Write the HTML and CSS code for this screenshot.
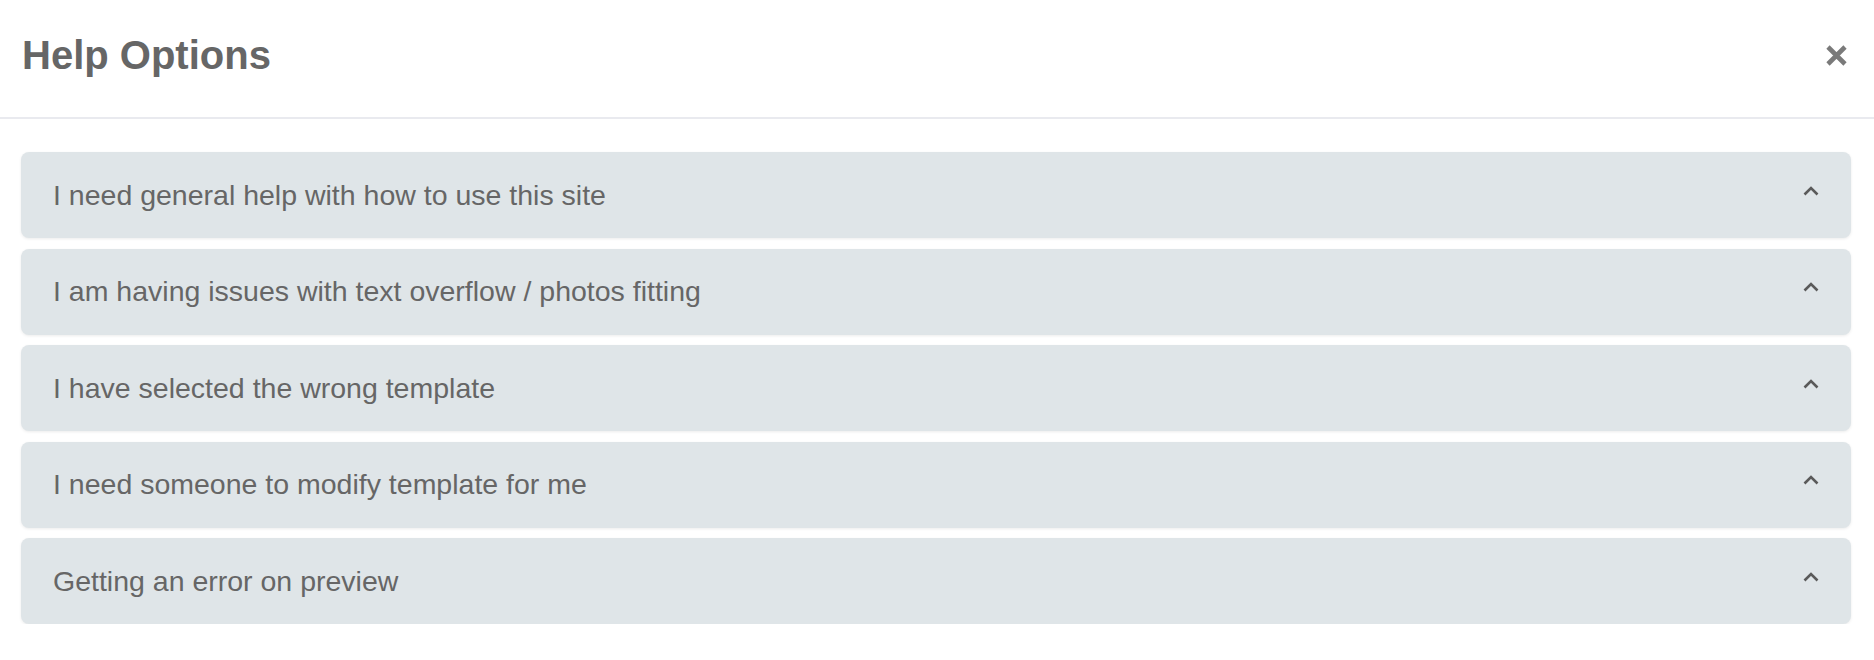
FILE: index.html
```html
<!DOCTYPE html>
<html lang="en">
<head>
  <meta charset="UTF-8" />
  <meta name="viewport" content="width=device-width, initial-scale=1.0"/>
  <title>Help Options</title>
  <link rel="stylesheet" href="styles.css">
</head>
<body>
  <div class="modal">
    <div class="modal-header">
      <h2>Help Options</h2>
      <button class="close-btn" aria-label="Close">
        <svg width="23" height="23" viewBox="0 0 23 23">
          <path d="M3 3 L20 20 M20 3 L3 20" stroke="#7a7a7a" stroke-width="4.6" stroke-linecap="butt" fill="none"/>
        </svg>
      </button>
    </div>

    <!-- Help topics -->
    <div class="modal-body">
      <div class="help-item">
        <span>I need general help with how to use this site</span>
        <svg class="chevron" width="16" height="10" viewBox="0 0 16 10"><polyline points="1.5,8.5 8,2 14.5,8.5" /></svg>
      </div>
      <div class="help-item">
        <span>I am having issues with text overflow / photos fitting</span>
        <svg class="chevron" width="16" height="10" viewBox="0 0 16 10"><polyline points="1.5,8.5 8,2 14.5,8.5" /></svg>
      </div>
      <div class="help-item">
        <span>I have selected the wrong template</span>
        <svg class="chevron" width="16" height="10" viewBox="0 0 16 10"><polyline points="1.5,8.5 8,2 14.5,8.5" /></svg>
      </div>
      <div class="help-item">
        <span>I need someone to modify template for me</span>
        <svg class="chevron" width="16" height="10" viewBox="0 0 16 10"><polyline points="1.5,8.5 8,2 14.5,8.5" /></svg>
      </div>
      <div class="help-item">
        <span>Getting an error on preview</span>
        <svg class="chevron" width="16" height="10" viewBox="0 0 16 10"><polyline points="1.5,8.5 8,2 14.5,8.5" /></svg>
      </div>
    </div>
  </div>
</body>
</html>
```

FILE: styles.css
```css
* {
  box-sizing: border-box;
}

body {
  margin: 0;
  font-family: 'Liberation Sans', Arial, sans-serif;
  background: #ffffff;
  color: #666;
}

.modal-header {
  height: 119px;
  display: flex;
  align-items: center;
  justify-content: space-between;
  padding: 0 26px 6px 22px;
  border-bottom: 2px solid #e9eaef;
}

.modal-header h2 {
  margin: 0;
  font-size: 40px;
  font-weight: bold;
  color: #666;
}

.close-btn {
  background: none;
  border: none;
  padding: 0;
  width: 23px;
  height: 23px;
  cursor: pointer;
}

.close-btn svg {
  display: block;
}

.modal-body {
  padding: 33px 23px 0 21px;
  display: flex;
  flex-direction: column;
  gap: 10.5px;
}

.help-item {
  height: 86px;
  display: flex;
  align-items: center;
  justify-content: space-between;
  padding: 0 32px 0 32px;
  background: #dfe5e8;
  border-radius: 8px;
  box-shadow: 0 1px 3px rgba(0, 0, 0, 0.08);
  font-size: 28.5px;
  color: #666;
  cursor: pointer;
}

.chevron {
  margin-bottom: 9px;
}

.chevron polyline {
  fill: none;
  stroke: #5a5a5a;
  stroke-width: 2.6;
}
```
